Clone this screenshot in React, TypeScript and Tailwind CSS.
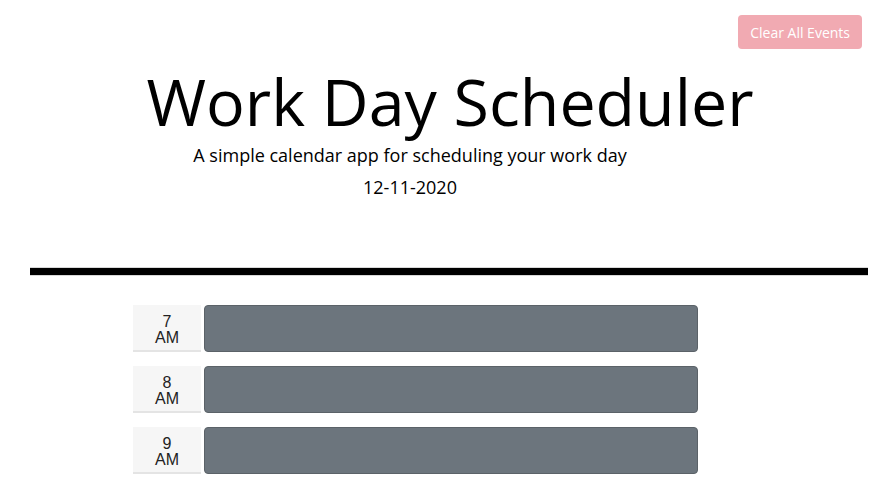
import React from "react";

const HOURS = [
  { h: "7", p: "AM" },
  { h: "8", p: "AM" },
  { h: "9", p: "AM" },
];

function HourRow({ h, p }: { h: string; p: string }) {
  return (
    <div className="flex items-stretch h-[47px] mb-[14px]">
      <div className="w-[68px] ml-[133px] pt-[4px] flex flex-col items-center justify-center bg-[#f6f6f6] border-b-2 border-[#e4e4e4] font-['Liberation_Sans',sans-serif] text-[16px] leading-[16px] text-[#222]">
        <span>{h}</span>
        <span>{p}</span>
      </div>
      <textarea
        className="ml-[3px] w-[494px] h-[47px] bg-[#6c757d] border border-[#5b6268] rounded-[4px] resize-none outline-none"
        readOnly
      />
    </div>
  );
}

export default function App() {
  return (
    <div className="min-h-screen bg-white font-['Open_Sans',sans-serif] text-black overflow-hidden">
      <div className="flex justify-end pt-[15px] pr-[34px]">
        <button className="h-[34px] px-[12px] rounded-[4px] bg-[#f1aab2] text-white text-[14px]">
          Clear All Events
        </button>
      </div>

      <header className="text-center">
        <h1 className="text-[64.5px] leading-[72px] mt-[16px] ml-[4px] font-normal">Work Day Scheduler</h1>
        <p className="text-[18px] leading-[24px] mt-[6px] mr-[76px]">A simple calendar app for scheduling your work day</p>
        <p className="text-[18px] leading-[24px] mt-[8px] mr-[76px]">12-11-2020</p>
      </header>

      <div className="ml-[30px] mr-[28px] mt-[68px] h-[9px] bg-black border-y border-[#d8d8d8]" />

      <div className="pt-[29px]">
        {HOURS.map((x) => (
          <HourRow key={x.h} h={x.h} p={x.p} />
        ))}
      </div>
    </div>
  );
}
